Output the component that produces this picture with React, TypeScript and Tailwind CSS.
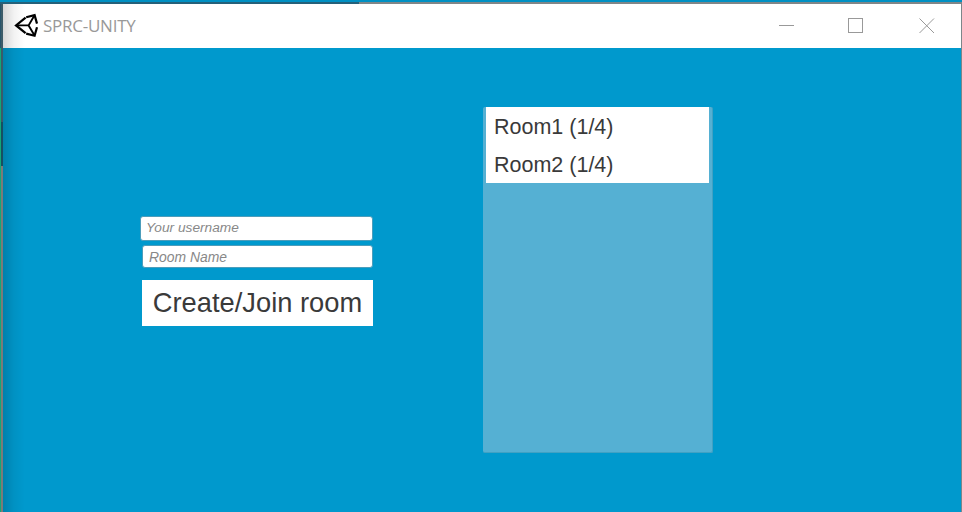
import React from "react";

const rooms = ["Room1 (1/4)", "Room2 (1/4)"];

function UnityLogo() {
  return (
    <svg className="mt-[9px] ml-[11px] h-[25px] w-[25px] shrink-0" viewBox="0 0 25 25" fill="none" stroke="#000" strokeWidth="1.9">
      <path d="M11.6 4.6 L2 12.4 L11.6 20.2" strokeWidth="2.2" />
      <path d="M12.2 4.2 L20.6 2.1 L23 10.6" strokeWidth="2.2" />
      <path d="M12.2 20.6 L20.6 22.7 L23 14.2" strokeWidth="2.2" />
      <path d="M2 12.4 H14.6 L20.4 2.6 M14.6 12.4 L20.4 22.2" />
    </svg>
  );
}

function TitleBar() {
  return (
    <header className="flex h-[44px] shrink-0 bg-white">
      <UnityLogo />
      <h1 className="ml-[4px] w-[110px] font-['Open_Sans','Noto_Sans',sans-serif] text-[17px] leading-[44px] font-normal tracking-[-0.25px] whitespace-nowrap text-[#999]">
        SPRC-UNITY
      </h1>
      <div className="ml-auto flex pt-[14px] pr-[26px]">
        <svg className="h-[16px] w-[156px]" viewBox="0 0 156 16" fill="none" stroke="#999" shapeRendering="crispEdges">
          <path d="M0 7.5H15" />
          <path d="M69.5 .5h14v14h-14z" />
          <path d="M140.5 .5l14.5 14.5M155 .5L140.5 15" shapeRendering="auto" />
        </svg>
      </div>
    </header>
  );
}

function RoomForm() {
  return (
    <form className="mt-[168px] ml-[137px] flex w-[233px] flex-col items-end">
      <div className="h-[25px] w-[233px] rounded-[3px] border border-[#4c9dbb] bg-white pl-[5px] text-[13.7px] leading-[22px] text-[#888] italic">
        Your username
      </div>
      <div className="mt-[4px] h-[23px] w-[231px] rounded-[3px] border border-[#4c9dbb] bg-white pl-[6px] text-[13.9px] leading-[22px] text-[#888] italic">
        Room Name
      </div>
      <button type="button" className="mt-[12px] h-[46px] w-[231px] bg-white text-[27.3px] leading-[46px] whitespace-nowrap text-[#3a3a3a]">
        Create/Join room
      </button>
    </form>
  );
}

function RoomList() {
  return (
    <section className="mt-[59px] ml-[110px] h-[346px] w-[230px] rounded-[2px] border-r border-b border-[#41a1c3] bg-[#55b0d3] pr-[3px] pl-[3px]">
      <ul className="h-[76px] w-[223px] bg-white">
        {rooms.map((room) => (
          <li key={room} className="h-[38px] pl-[8px] text-[21.5px] leading-[40px] whitespace-nowrap text-[#3a3a3a]">
            {room}
          </li>
        ))}
      </ul>
    </section>
  );
}

export default function App() {
  return (
    <div className="flex h-[512px] w-[962px] flex-col overflow-hidden bg-[#0099cd] font-['Liberation_Sans',Arial,sans-serif]">
      <div className="h-[2px] shrink-0 bg-[#0090c3]" />
      <div className="flex h-[2px] shrink-0">
        <div className="w-[359px] bg-[#25617a]" />
        <div className="grow bg-[#808688]" />
      </div>
      <div className="flex grow">
        <div className="flex w-px flex-col">
          <div className="h-[44px] bg-[#27536a]" />
          <div className="grow bg-[#12a777]" />
        </div>
        <div className="flex w-[2px] flex-col">
          <div className="h-[118px] bg-[#3b5b68]" />
          <div className="h-[44px] bg-[#174f61]" />
          <div className="grow bg-[#7c7b78]" />
        </div>
        <div className="relative flex w-[958px] flex-col">
          <TitleBar />
          <main className="flex grow items-start bg-[#0099cd]">
            <RoomForm />
            <RoomList />
          </main>
          <div className="pointer-events-none absolute inset-y-0 left-0 w-[22px] bg-linear-to-r from-black/16 via-black/5 to-transparent" />
        </div>
        <div className="w-px bg-[#7c868a]" />
      </div>
    </div>
  );
}
